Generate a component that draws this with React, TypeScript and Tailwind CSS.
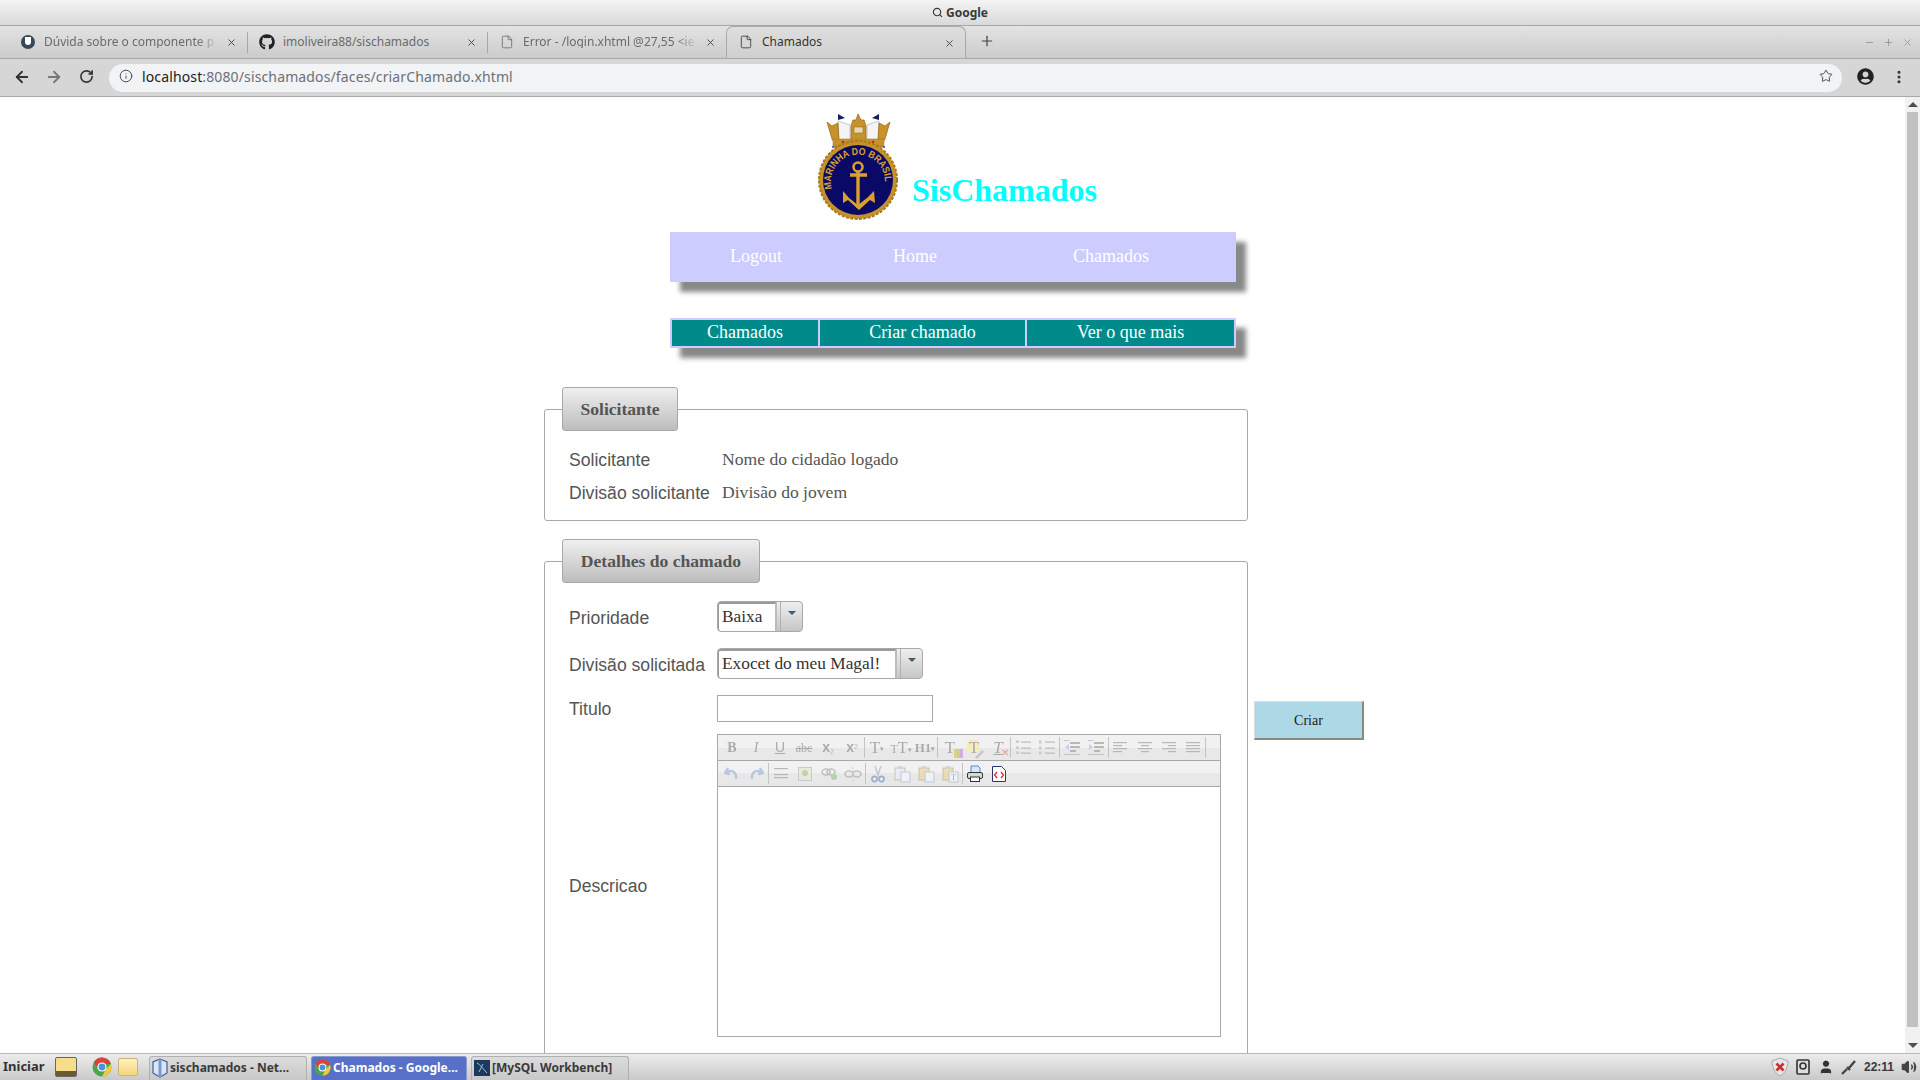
import React from 'react';
import { ArrowLeft, ArrowRight, RotateCw, Info, Star, X, Plus, Search, File, MoreVertical, Minus, Volume2, User } from 'lucide-react';
import { FaGithub, FaUserCircle } from 'react-icons/fa';

const uiFont = "font-['Noto_Sans','Open_Sans',sans-serif]";

const Tab = ({ icon, title, width, active, first, fade }: { icon: React.ReactNode; title: string; width: string; active?: boolean; first?: boolean; fade?: boolean }) => (
  <div className={`${width} h-[32px] flex items-center shrink-0 relative ${active ? 'border-x border-t border-[#a8a8a8] rounded-t-[7px] bg-[linear-gradient(#dedede,#d0d0d0)] text-[#333] pb-[1px]' : 'text-[#6a6a6a]'}`}>
    <span className={`w-[18px] flex justify-center shrink-0 ${first ? 'ml-[19px]' : 'ml-[10px]'}`}>{icon}</span>
    <span className={`ml-[7px] w-[174px] whitespace-nowrap text-[12px] leading-none ${fade ? '[mask-image:linear-gradient(90deg,#000_88%,transparent)]' : ''}`}>{title}</span>
    <X size={11} strokeWidth={2} className="absolute right-[10px] top-[11px] text-[#444]" />
  </div>
);

const NavyLogo = () => (
  <svg width="82" height="108" viewBox="0 0 82 108" className="shrink-0">
    {/* crown */}
    <path d="M20 8 L32 12 L32 28 L21 28 Z" fill="#f4f4f4" stroke="#a9a9a9" strokeWidth=".6" />
    <path d="M61 8 L49 12 L49 28 L60 28 Z" fill="#f4f4f4" stroke="#a9a9a9" strokeWidth=".6" />
    <path d="M20 1 L27 5 L20 7 Z M61 1 L54 5 L61 7 Z" fill="#14205c" />
    <path d="M9 9 L14 13 L20 10 L21 28 L16 34 L65 34 L60 28 L61 10 L67 13 L72 9 L67 26 L62 34 L19 34 L14 26 Z" fill="#c8922a" stroke="#8c6417" strokeWidth=".7" />
    <path d="M33 13 L35 7 L38 7 L40 1 L43 7 L46 7 L48 13 L48 27 L33 27 Z" fill="#c8922a" stroke="#8c6417" strokeWidth=".7" />
    <rect x="36" y="14" width="9" height="6" fill="#e7d7ad" stroke="#8c6417" strokeWidth=".5" />
    <rect x="15" y="26" width="51" height="7" fill="#c8922a" stroke="#a87920" strokeWidth=".5" />
    <circle cx="25" cy="29" r="1.3" fill="#a33" /><circle cx="40" cy="29" r="1.3" fill="#4a4" /><circle cx="55" cy="29" r="1.3" fill="#a33" />
    <circle cx="15" cy="34" r="1" fill="#24c" /><circle cx="66" cy="34" r="1" fill="#24c" />
    {/* rope ring and badge */}
    <circle cx="40" cy="67" r="39" fill="#c8922a" stroke="#a87920" strokeWidth="2" strokeDasharray="3 1.4" />
    <circle cx="40" cy="67" r="35" fill="#0a0a66" />
    <path id="logo-arc" d="M14 76 A27 27 0 1 1 66 76" fill="none" />
    <text fontFamily="Liberation Sans, sans-serif" fontWeight="700" fontSize="10" fill="#d9a02f">
      <textPath href="#logo-arc" textLength="92" lengthAdjust="spacingAndGlyphs">MARINHA DO BRASIL</textPath>
    </text>
    <circle cx="40" cy="54" r="4.5" fill="none" stroke="#d9a02f" strokeWidth="2.6" />
    <path d="M40 59 V95 M32 62 H49" fill="none" stroke="#d9a02f" strokeWidth="3.4" />
    <path d="M25 78 L31 85 L40 92 L49 85 L56 78 L57 90 L52 87 L41 97 L30 87 L25 90 Z" fill="#d9a02f" />
  </svg>
);

const LegendBox = ({ children, width }: { children: string; width: string }) => (
  <legend className={`${width} ml-[17px] h-[44px] flex items-center justify-center border border-[#a8a8a8] rounded-[3px] bg-[linear-gradient(#efefef,#bdbdbd)] font-['Liberation_Serif',serif] font-bold text-[17.6px] text-[#555]`}>
    {children}
  </legend>
);

const Label = ({ children, width, pad }: { children: string; width: string; pad: string }) => (
  <span className={`${width} ${pad} shrink-0 font-['Liberation_Sans',sans-serif] text-[17.6px] leading-[24px] text-[#555]`}>{children}</span>
);

const SelectBox = ({ value, width, inputWidth }: { value: string; width: string; inputWidth: string }) => (
  <div className={`${width} h-[31px] flex border border-[#a8a8a8] rounded-[4px] bg-[linear-gradient(#efefef,#c6c6c6)]`}>
    <div className={`${inputWidth} h-full bg-white rounded-l-[3px] border-t-2 border-l border-[#9a9a9a] border-r-2 border-r-[#bbb] pl-[3px] font-['Liberation_Serif',serif] text-[17.33px] leading-[25px] text-[#333] whitespace-nowrap`}>
      {value}
    </div>
    <div className="flex-1 flex justify-center pt-[9px] border-l border-[#b0b0b0] ml-[3px]">
      <span className="w-0 h-0 border-x-[4px] border-x-transparent border-t-[4px] border-t-[#3f5b73]" />
    </div>
  </div>
);

// one toolbar button: fixed cell, the glyph or small drawing goes inside
const Btn = ({ children, on }: { children: React.ReactNode; on?: boolean }) => (
  <div className={`w-[24px] h-full flex items-center justify-center shrink-0 font-['Liberation_Serif',serif] text-[#9a9a9a] ${on ? '' : 'opacity-80'}`}>{children}</div>
);
const Sep = () => <div className="w-px h-[21px] bg-[#c4c4c4] shrink-0" />;

const Lines = ({ rows }: { rows: number[][] }) => (
  <svg width="16" height="14" viewBox="0 0 16 14">
    {rows.map(([x, w], i) => (
      <rect key={i} x={x} y={1 + i * 3} width={w} height="1.2" fill="#aaa" />
    ))}
  </svg>
);

const ListIcon = ({ numbered }: { numbered?: boolean }) => (
  <svg width="16" height="16" viewBox="0 0 16 16">
    {[2, 8, 13].map((y) => (
      <g key={y}>
        <rect x={numbered ? 0 : 1} y={y - 1.5} width={numbered ? 2.5 : 3} height={numbered ? 3 : 2.4} fill="#b8c4d8" />
        <rect x="6" y={y - 0.5} width="10" height="1.2" fill="#b0b0b0" />
      </g>
    ))}
  </svg>
);

const IndentIcon = ({ flip }: { flip?: boolean }) => (
  <svg width="18" height="18" viewBox="0 0 18 18">
    <rect x="7" y="3" width="10" height="2" fill="#aaa" /><rect x="7" y="7" width="10" height="2" fill="#aaa" /><rect x="7" y="11" width="6" height="2" fill="#aaa" />
    <rect x="1" y="15" width="16" height="1" fill="#bbb" /><rect x="1" y="1" width="5" height="1" fill="#bbb" />
    <path d={flip ? 'M2 5 L6 8 L2 11 Z' : 'M6 5 L2 8 L6 11 Z'} fill="#b9c8e6" />
  </svg>
);

const DocPair = ({ color, extra }: { color: string; extra?: React.ReactNode }) => (
  <svg width="18" height="18" viewBox="0 0 18 18">
    <rect x="2" y="3" width="10" height="12" fill={color} stroke="#c3b794" />
    <rect x="5" y="1" width="4" height="3" fill="#ccc" />
    <rect x="8" y="7" width="9" height="10" fill="#f2f4f8" stroke="#b6c0d2" />
    {extra}
  </svg>
);

const EditorToolbar = () => (
  <div>
    <div className="h-[26px] flex items-center pl-[2px] bg-[linear-gradient(#f1f1f1_50%,#e8e8e8_50%)] border-b border-[#a8a8a8]">
      <Btn><b className="text-[14px]">B</b></Btn>
      <Btn><i className="text-[14px]">I</i></Btn>
      <Btn><u className="text-[14px] font-['Liberation_Sans',sans-serif]">U</u></Btn>
      <Btn><s className="text-[12px]">abc</s></Btn>
      <Btn><span className="text-[14px] font-['Liberation_Sans',sans-serif] font-bold">x<sub className="text-[7px] font-normal text-[#9fb0d0]">2</sub></span></Btn>
      <Btn><span className="text-[14px] font-['Liberation_Sans',sans-serif] font-bold">x<sup className="text-[7px] font-normal text-[#9fb0d0]">2</sup></span></Btn>
      <Sep />
      <Btn><span className="text-[17px] leading-none">T<span className="text-[7px] align-middle">▾</span></span></Btn>
      <Btn><span className="text-[12px] leading-none whitespace-nowrap">T<span className="text-[16px]">T</span><span className="text-[7px] align-middle">▾</span></span></Btn>
      <Btn><span className="text-[13px] leading-none font-bold whitespace-nowrap">H1<span className="text-[7px] align-middle">▾</span></span></Btn>
      <Sep />
      <Btn>
        <span className="relative text-[17px] leading-none">T<span className="absolute right-[-8px] bottom-[-2px] w-[9px] h-[9px] bg-[linear-gradient(90deg,#e9c86a_33%,#b5d08c_33%,#b5d08c_66%,#cfa0d8_66%)]" /></span>
      </Btn>
      <Btn>
        <span className="relative text-[17px] leading-none">
          <span className="absolute left-[-3px] top-[0px] w-[14px] h-[14px] rounded-full bg-[#f6eeb0]" />
          <span className="relative">T</span>
          <svg width="10" height="10" viewBox="0 0 10 10" className="absolute right-[-6px] bottom-[-3px]"><path d="M1 9 L8 2" stroke="#bbb" strokeWidth="2.4" /></svg>
        </span>
      </Btn>
      <Btn>
        <span className="relative text-[17px] leading-none italic"><u>T</u><span className="absolute right-[-6px] bottom-[-2px] text-[10px] not-italic font-bold text-[#ee9a9a]">✕</span></span>
      </Btn>
      <Sep />
      <Btn><ListIcon /></Btn>
      <Btn><ListIcon numbered /></Btn>
      <Sep />
      <Btn><IndentIcon /></Btn>
      <Btn><IndentIcon flip /></Btn>
      <Sep />
      <Btn><Lines rows={[[0, 14], [0, 9], [0, 14], [0, 9]]} /></Btn>
      <Btn><Lines rows={[[1, 14], [4, 8], [1, 14], [4, 8]]} /></Btn>
      <Btn><Lines rows={[[1, 14], [7, 8], [1, 14], [7, 8]]} /></Btn>
      <Btn><Lines rows={[[1, 14], [1, 14], [1, 14], [1, 14]]} /></Btn>
      <Sep />
    </div>
    <div className="h-[26px] flex items-center pl-[2px] bg-[linear-gradient(#f1f1f1_50%,#e8e8e8_50%)] border-b border-[#a8a8a8]">
      <Btn>
        <svg width="16" height="16" viewBox="0 0 16 16"><path d="M4 2 L1 7 L6 8 M2 7 C6 3 13 5 12 13" fill="none" stroke="#a9bedd" strokeWidth="2.4" /></svg>
      </Btn>
      <Btn>
        <svg width="16" height="16" viewBox="0 0 16 16"><path d="M12 2 L15 7 L10 8 M14 7 C10 3 3 5 4 13" fill="none" stroke="#a9bedd" strokeWidth="2.4" /></svg>
      </Btn>
      <Sep />
      <Btn><Lines rows={[[1, 14], [1, 0], [1, 14], [1, 14]]} /></Btn>
      <Btn>
        <svg width="16" height="16" viewBox="0 0 16 16"><rect x="1.5" y="1.5" width="13" height="13" fill="#e4ead8" stroke="#bcc4cc" /><circle cx="8" cy="7" r="3" fill="#b9cba0" /></svg>
      </Btn>
      <Btn>
        <svg width="18" height="16" viewBox="0 0 18 16"><ellipse cx="6" cy="6" rx="4" ry="3" fill="none" stroke="#b5b5b5" strokeWidth="1.6" /><ellipse cx="11" cy="6" rx="4" ry="3" fill="none" stroke="#b5b5b5" strokeWidth="1.6" /><circle cx="14" cy="11" r="3" fill="#a9cf9a" /></svg>
      </Btn>
      <Btn>
        <svg width="18" height="16" viewBox="0 0 18 16"><ellipse cx="5" cy="8" rx="4" ry="3" fill="none" stroke="#b5b5b5" strokeWidth="1.6" /><ellipse cx="13" cy="8" rx="4" ry="3" fill="none" stroke="#b5b5b5" strokeWidth="1.6" /><path d="M9 1 V15" stroke="#b9c8e6" strokeDasharray="2 1" /></svg>
      </Btn>
      <Sep />
      <Btn>
        <svg width="16" height="18" viewBox="0 0 16 18"><path d="M5 1 L8 10 L11 1" fill="none" stroke="#b5bfd0" strokeWidth="1.4" /><circle cx="4.5" cy="14" r="2.6" fill="none" stroke="#8aa0c8" strokeWidth="1.6" /><circle cx="11.5" cy="14" r="2.6" fill="none" stroke="#8aa0c8" strokeWidth="1.6" /></svg>
      </Btn>
      <Btn><DocPair color="#e8eef8" /></Btn>
      <Btn><DocPair color="#ecd9a8" /></Btn>
      <Btn><DocPair color="#ecd9a8" extra={<text x="10" y="15" fontSize="8" fill="#999" fontFamily="Liberation Serif, serif">T</text>} /></Btn>
      <Sep />
      <Btn on>
        <svg width="18" height="18" viewBox="0 0 18 18"><path d="M5 1 H12 L14 3 V8 H5 Z" fill="#d7e6fa" stroke="#5b86c5" /><rect x="1.5" y="7.5" width="15" height="6" rx="1.5" fill="#d8d8d8" stroke="#333" /><rect x="4.5" y="12" width="9" height="4.5" fill="#fff" stroke="#333" /></svg>
      </Btn>
      <Btn on>
        <svg width="16" height="18" viewBox="0 0 16 18"><path d="M1.5 1.5 H10.5 L14.5 5.5 V16.5 H1.5 Z" fill="#fff" stroke="#24386e" /><path d="M6 7 L3.5 10 L6 13" fill="none" stroke="#e22" strokeWidth="1.2" /><path d="M10 7 L12.5 10 L10 13" fill="none" stroke="#e22" strokeWidth="1.2" /></svg>
      </Btn>
    </div>
  </div>
);

const ChromeIcon = ({ size }: { size: number }) => (
  <svg width={size} height={size} viewBox="0 0 20 20" className="shrink-0">
    <circle cx="10" cy="10" r="9.5" fill="#4ba54f" />
    <path d="M10 .5 A9.5 9.5 0 0 1 19 7 H10 Z M1.8 5.2 A9.5 9.5 0 0 1 10 .5 V7 L6 11 Z" fill="#d9443a" />
    <path d="M19 7 A9.5 9.5 0 0 1 10 19.5 L14 12 Z" fill="#f1c93b" />
    <circle cx="10" cy="10" r="4.6" fill="#fff" /><circle cx="10" cy="10" r="3.4" fill="#4a8fe0" />
  </svg>
);

const TaskButton = ({ icon, label, active, width }: { icon: React.ReactNode; label: string; active?: boolean; width: string }) => (
  <div className={`${width} h-[24px] self-end mr-[4px] pb-[2px] flex items-center gap-[2px] pl-[2px] rounded-t-[3px] border border-b-0 font-bold text-[12px] whitespace-nowrap ${active ? 'bg-[#5870c8] border-[#8a98d0] text-white' : 'bg-[linear-gradient(#dcdcdc,#c8c8c8)] border-[#b0b0b0] text-[#3a3a3a]'}`}>
    {icon}
    <span>{label}</span>
  </div>
);

const App: React.FC = () => {
  return (
    <div className={`w-[1920px] h-[1080px] overflow-hidden flex flex-col bg-white ${uiFont}`}>
      {/* window title */}
      <div className="h-[26px] shrink-0 flex items-center justify-center gap-[3px] border-b border-[#a8a8a8] bg-[linear-gradient(#f4f4f4,#d9d9d9)] text-[12px] font-bold text-[#3a3a3a]">
        <Search size={11} strokeWidth={2.5} />
        <span>Google</span>
      </div>

      {/* tabs */}
      <div className="h-[33px] shrink-0 flex items-end border-b border-[#a8a8a8] bg-[linear-gradient(#e3e3e3,#cbcbcb)] relative">
        <Tab
          first
          fade
          width="w-[247px]"
          title="Dúvida sobre o componente p"
          icon={<span className="w-[14px] h-[14px] rounded-full bg-[#34495e] flex justify-center"><span className="w-[6px] h-[8px] mt-[2px] rounded-b-full bg-white" /></span>}
        />
        <span className="w-px h-[21px] mb-[5px] bg-[#a8a8a8] shrink-0" />
        <Tab width="w-[239px]" title="imoliveira88/sischamados" icon={<FaGithub size={16} className="text-[#222]" />} />
        <span className="w-px h-[21px] mb-[5px] bg-[#a8a8a8] shrink-0" />
        <Tab fade width="w-[238px]" title="Error - /login.xhtml @27,55 <ie" icon={<File size={14} strokeWidth={1.4} />} />
        <Tab active width="w-[240px]" title="Chamados" icon={<File size={14} strokeWidth={1.4} />} />
        <Plus size={16} strokeWidth={1.8} className="ml-[13px] mb-[9px] text-[#444]" />
        <div className="flex-1" />
        <div className="flex items-center gap-[8px] mb-[10px] mr-[7px] text-[#999]">
          <Minus size={11} strokeWidth={2} />
          <Plus size={11} strokeWidth={2} />
          <X size={11} strokeWidth={2} />
        </div>
      </div>

      {/* address bar */}
      <div className="h-[38px] shrink-0 flex items-center border-b border-[#a8a8a8] bg-[#d6d6d6] pl-[13px]">
        <ArrowLeft size={18} strokeWidth={2.4} className="text-[#333] -translate-y-px" />
        <ArrowRight size={18} strokeWidth={2.4} className="ml-[14px] text-[#777] -translate-y-px" />
        <RotateCw size={15} strokeWidth={2.6} className="ml-[16px] text-[#333] -translate-y-px" />
        <div className="ml-[15px] w-[1733px] h-[28px] rounded-[14px] bg-[#f1f3f4] flex items-center pl-[10px] pb-[3px]">
          <Info size={14} strokeWidth={1.6} className="text-[#444]" />
          <span className="ml-[9px] text-[14px] tracking-[0.13px] text-[#222]">localhost</span>
          <span className="text-[14px] tracking-[0.13px] text-[#6c7078]">:8080/sischamados/faces/criarChamado.xhtml</span>
          <Star size={14} strokeWidth={1.6} className="ml-auto mr-[9px] text-[#444]" />
        </div>
        <FaUserCircle size={17} className="ml-[15px] text-[#222] -translate-y-px" />
        <MoreVertical size={16} strokeWidth={2.6} className="ml-[17px] text-[#333] -translate-y-px" />
      </div>

      {/* page */}
      <div className="flex-1 min-h-0 flex overflow-hidden">
        <div className="flex-1 overflow-hidden">
          <div className="h-[135px] pl-[818px] pt-[16px] flex items-start">
            <NavyLogo />
            <h1 className="ml-[12px] mt-[59px] font-['Liberation_Serif',serif] font-bold text-[32px] leading-[37px] text-[#00ffff]">SisChamados</h1>
          </div>

          <div className="ml-[670px] w-[566px] h-[50px] pb-[2px] bg-[#ccccff] shadow-[10px_10px_5px_#888888] flex items-center font-['Liberation_Serif',serif] text-[18px] text-white">
            <span className="ml-[60px]">Logout</span>
            <span className="ml-[111px]">Home</span>
            <span className="ml-[136px]">Chamados</span>
          </div>

          <div className="ml-[670px] mt-[36px] w-[566px] h-[30px] bg-[#ccccff] p-[2px] gap-[2px] shadow-[10px_10px_5px_#888888] flex font-['Liberation_Serif',serif] text-[18px] leading-[24px] text-white">
            <div className="w-[146px] bg-[#008b8b] text-center">Chamados</div>
            <div className="w-[205px] bg-[#008b8b] text-center">Criar chamado</div>
            <div className="flex-1 bg-[#008b8b] text-center">Ver o que mais</div>
          </div>

          <fieldset className="ml-[544px] mt-[39px] w-[704px] h-[134px] border border-[#a8a8a8] rounded-[3px]">
            <LegendBox width="w-[116px]">Solicitante</LegendBox>
            <div className="pl-[24px] pt-[12px]">
              <div className="h-[33px] flex items-center">
                <Label width="w-[153px]" pad="pt-0">Solicitante</Label>
                <span className="font-['Liberation_Serif',serif] text-[17.6px] text-[#555]">Nome do cidadão logado</span>
              </div>
              <div className="h-[33px] flex items-center">
                <Label width="w-[153px]" pad="pt-0">Divisão solicitante</Label>
                <span className="font-['Liberation_Serif',serif] text-[17.6px] text-[#555]">Divisão do jovem</span>
              </div>
            </div>
          </fieldset>

          <div className="mt-[18px] flex items-start">
            <fieldset className="ml-[544px] w-[704px] h-[620px] border border-[#a8a8a8] rounded-[3px]">
              <LegendBox width="w-[198px]">Detalhes do chamado</LegendBox>
              <div className="pl-[24px] pt-[18px]">
                <div className="flex items-center">
                  <Label width="w-[148px]" pad="pt-[3px]">Prioridade</Label>
                  <SelectBox value="Baixa" width="w-[86px]" inputWidth="w-[59px]" />
                </div>
                <div className="mt-[16px] flex items-center">
                  <Label width="w-[148px]" pad="pt-[3px]">Divisão solicitada</Label>
                  <SelectBox value="Exocet do meu Magal!" width="w-[206px]" inputWidth="w-[179px]" />
                </div>
                <div className="mt-[16px] flex items-center">
                  <Label width="w-[148px]" pad="pt-0">Titulo</Label>
                  <div className="w-[216px] h-[27px] border border-[#a8a8a8] bg-white" />
                </div>
                <div className="mt-[12px] flex items-center">
                  <Label width="w-[148px]" pad="pt-0">Descricao</Label>
                  <div className="w-[504px] h-[303px] border border-[#a8a8a8] bg-white">
                    <EditorToolbar />
                  </div>
                </div>
              </div>
            </fieldset>
            <button className="ml-[6px] mt-[162px] w-[110px] h-[39px] bg-[#add8e6] border-t border-l border-[#ddd] border-r-2 border-b-2 border-r-[#888] border-b-[#888] font-['Liberation_Serif',serif] text-[14px] text-[#222]">
              Criar
            </button>
          </div>
        </div>

        {/* scrollbar */}
        <div className="w-[15px] shrink-0 bg-[#f1f1f1] flex flex-col items-center relative">
          <span className="mt-[5px] w-0 h-0 border-x-[5px] border-x-transparent border-b-[5px] border-b-[#505050]" />
          <div className="mt-[5px] w-[11px] h-[915px] bg-[#c1c1c1]" />
          <span className="mt-[16px] w-0 h-0 border-x-[5px] border-x-transparent border-t-[5px] border-t-[#505050]" />
        </div>
      </div>

      {/* desktop panel */}
      <div className="h-[27px] shrink-0 flex items-center border-t border-[#b8b8b8] bg-[linear-gradient(#ececec,#c9c9c9)] pl-[3px]">
        <span className="font-bold text-[13px] text-[#333] w-[52px]">Iniciar</span>
        <div className="w-[22px] h-[20px] border border-[#666] bg-[linear-gradient(#f6dd8c_70%,#6b5a2a_70%)] rounded-[2px]" />
        <span className="ml-[15px]"><ChromeIcon size={20} /></span>
        <div className="ml-[6px] w-[20px] h-[18px] mr-[11px] rounded-[2px] border border-[#c9b676] bg-[linear-gradient(#fff2c0,#f3d67a)]" />
        <TaskButton
          width="w-[158px]"
          label="sischamados - Net..."
          icon={<svg width="16" height="20" viewBox="0 0 16 20" className="shrink-0"><path d="M8 1 L15 4 V15 L8 19 L1 15 V4 Z" fill="#dce6f6" stroke="#3f5f9c" strokeWidth="1.2" /><path d="M8 1 V19" stroke="#7d9ad0" strokeWidth="3" /></svg>}
        />
        <TaskButton active width="w-[156px]" label="Chamados - Google..." icon={<ChromeIcon size={17} />} />
        <TaskButton
          width="w-[158px]"
          label="[MySQL Workbench]"
          icon={<svg width="16" height="18" viewBox="0 0 16 18" className="shrink-0"><rect x="0" y="1" width="16" height="16" fill="#1c3a5e" /><path d="M3 4 C7 6 9 10 13 14 M5 13 L9 5" stroke="#9fc0de" fill="none" /></svg>}
        />
        <div className="flex-1" />
        <svg width="18" height="20" viewBox="0 0 18 20" className="shrink-0">
          <path d="M9 1 L17 4 C17 11 14 16 9 19 C4 16 1 11 1 4 Z" fill="#e6e6e6" stroke="#aaa" />
          <path d="M5.5 6.5 L12.5 13.5 M12.5 6.5 L5.5 13.5" stroke="#c9302c" strokeWidth="2.6" />
        </svg>
        <svg width="14" height="16" viewBox="0 0 14 16" className="ml-[7px] shrink-0">
          <rect x="1" y="1" width="12" height="14" rx="1" fill="#ddd" stroke="#333" strokeWidth="1.6" />
          <circle cx="7" cy="7" r="3" fill="none" stroke="#333" strokeWidth="1.6" />
        </svg>
        <User size={16} fill="#333" strokeWidth={1.5} className="ml-[8px] text-[#333]" />
        <svg width="16" height="16" viewBox="0 0 16 16" className="ml-[7px] shrink-0">
          <path d="M1 15 L6 10 M6 8 L9 11 M8 9 L14 2" stroke="#444" strokeWidth="2.4" fill="none" />
        </svg>
        <span className="ml-[7px] font-['Liberation_Sans',sans-serif] font-bold text-[12px] text-[#3a3a3a]">22:11</span>
        <Volume2 size={16} fill="#444" strokeWidth={2} className="ml-[7px] mr-[3px] text-[#444]" />
      </div>
    </div>
  );
};

export default App;
